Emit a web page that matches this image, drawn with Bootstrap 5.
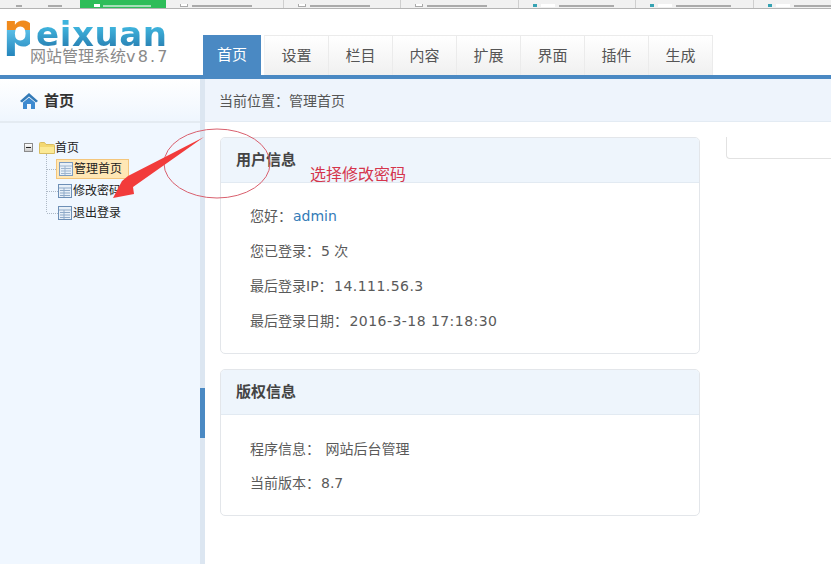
<!DOCTYPE html>
<html lang="zh">
<head>
<meta charset="utf-8">
<title>管理首页</title>
<link href="https://cdn.jsdelivr.net/npm/bootstrap@5.3.0/dist/css/bootstrap.min.css" rel="stylesheet">
<style>
html,body{height:564px;overflow:hidden;background:#fff;}
body{font-family:"DejaVu Sans","Noto Sans CJK SC",sans-serif;font-size:14px;color:#5a5a5a;position:relative;width:831px;}
.strip{height:9px;background:#f1f1f1;border-bottom:1px solid #b4b4b4;overflow:hidden;}
.tb{width:117.5px;height:8px;border-right:1px solid #cfcfcf;padding-left:14px;gap:4px;flex:none;}
.tb-first{width:80px;flex:none;height:8px;padding-left:16px;gap:26px;}
.tb-green{width:86px;flex:none;height:8px;background:#2ebd59;padding-left:14px;gap:3px;}
.smudge{display:block;height:2px;background:#aaa;margin-bottom:1px;}
.chk{width:8px;height:3px;border:1px solid #aaa;border-top:0;background:#fff;display:block;margin-bottom:1px;}
.teal{width:4px;height:3px;background:#36a3b3;display:block;margin-bottom:1px;}
.wbox{width:14px;height:3px;background:#fff;display:block;margin-bottom:1px;}
.wfade{height:2px;background:#a5e0b8;display:block;margin-bottom:1px;}
.head{height:66px;}
.logo{width:203px;flex:none;height:66px;padding:3px 0 0 3px;}
.logop{font-family:"DejaVu Sans",sans-serif;font-weight:700;font-size:46px;line-height:46px;height:50px;width:27px;flex:none;margin-top:-5px;background:linear-gradient(180deg,#f08a1c 0 46%,#58bde6 47%,#2283ba 100%);-webkit-background-clip:text;background-clip:text;color:transparent;}
.logoright{flex:none;padding:4px 0 0 6px;}
.logow{font-family:"DejaVu Sans",sans-serif;font-weight:700;font-size:34px;line-height:31px;height:31px;padding-top:3px;box-sizing:border-box;letter-spacing:.6px;white-space:nowrap;background:linear-gradient(180deg,#3fb4dd 35%,#2b86b8 95%);-webkit-background-clip:text;background-clip:text;color:transparent;}
.logosub{margin-left:-6px;font-size:16px;line-height:20px;color:#8a8a8a;white-space:nowrap;}
.logosub b{font-weight:400;letter-spacing:2.2px;font-size:16px;}
.tabs{margin-top:26px;height:40px;}
.tabs .nav-link{width:64px;height:40px;padding:0;line-height:40px;text-align:center;color:#555;font-size:15px;border:1px solid #ebebeb;border-width:1px 1px 0 0;border-radius:0;background:linear-gradient(180deg,#fff,#f0f0f0);}
.tabs .nav-item:first-child .nav-link{width:58px;margin-right:3px;background:#4a89c3;color:#fff;border:0;}
.tabs .nav-item:nth-child(2) .nav-link{border-left:1px solid #f2f2f2;width:65px;}
.blue{height:4px;background:#4a89c3;}
.mainrow{height:485px;}
.side{width:200px;flex:none;background:#f0f7ff;}
.sidehead{height:44px;padding-top:2px;background:linear-gradient(180deg,#fff,#eff6fe);border-bottom:2px solid #e4ebf2;padding-left:20px;gap:6px;color:#333;font-weight:700;font-size:15px;}
.split{width:5px;flex:none;background:#dce6f1;padding-top:309px;}
.handle{height:50px;background:#4a89c3;}
.content{flex:1;min-width:0;}
.crumb{height:43px;padding-top:2px;background:#eef4fc;border-bottom:1px solid #e3ebf3;padding-left:14px;color:#555;}
.tree{padding:14px 0 0 24px;color:#222;font-size:12px;}
.tree-root{height:21px;gap:6px;}
.minus{width:9px;height:9px;border:1px solid #8b8b8b;background:linear-gradient(180deg,#fff,#ccc);display:flex;align-items:center;justify-content:center;}
.minus i{display:block;width:5px;height:1px;background:#222;}
.vline{width:0;border-left:1px dotted #aeb9c6;height:58px;margin-top:-4px;}
.tl{height:22px;white-space:nowrap;}
.dash{width:11px;border-top:1px dotted #aeb9c6;flex:none;}
.tl-sel .dash{width:9px;}
.tl-sel .tlbox{background:#ffe7b5;border:1px solid #f4c67c;padding:0 6px 0 2px;}
.tlbox{height:20px;gap:1px;}
.panel{width:480px;border-color:#e3e6ea;border-radius:5px;overflow:hidden;}
.panel .card-header{height:45px;background:#eef5fc;border-bottom:1px solid #e2eaf2;padding:0 15px;font-weight:700;font-size:15px;color:#444;border-radius:0;}
.col-panels{margin:15px 0 0 15px;gap:15px;width:480px;flex:none;}
.pb1{height:170px;flex:none;padding:16px 29px 0;}
.pb2{height:100px;flex:none;padding:17px 29px 0;}
.lnr{height:35px;line-height:35px;white-space:nowrap;}
.lnr2{height:34px;line-height:34px;white-space:nowrap;}
.lnr a{color:#337ab7;text-decoration:none;margin-left:1px;}
.val{margin-left:1px;}
.num{letter-spacing:.45px;margin-left:1.5px;}
.sidebox{width:106px;height:22px;margin:15px 0 0 26px;flex:none;border-left:1px solid #e2e2e2;border-bottom:1px solid #e2e2e2;border-bottom-left-radius:4px;}
.annot{position:absolute;left:0;top:0;width:831px;height:564px;pointer-events:none;}
.note{position:absolute;left:310px;top:162px;font-size:16px;line-height:22px;color:#d5354c;font-family:"Noto Sans CJK SC",sans-serif;}
</style>
</head>
<body>
<div class="strip d-flex">
  <div class="tb-first d-flex align-items-end"><span class="smudge" style="width:6px"></span><span class="smudge" style="width:14px"></span></div>
  <div class="tb-green d-flex align-items-end"><span class="wbox" style="width:6px"></span><span class="wfade" style="width:48px"></span></div>
  <div class="tb d-flex align-items-end"><span class="chk"></span><span class="smudge" style="width:60px"></span></div>
  <div class="tb d-flex align-items-end"><span class="chk"></span><span class="smudge" style="width:60px"></span></div>
  <div class="tb d-flex align-items-end"><span class="chk"></span><span class="smudge" style="width:60px"></span></div>
  <div class="tb d-flex align-items-end"><span class="teal"></span><span class="wbox"></span><span class="smudge" style="width:55px"></span></div>
  <div class="tb d-flex align-items-end"><span class="teal"></span><span class="wbox"></span><span class="smudge" style="width:55px"></span></div>
  <div class="tb d-flex align-items-end"><span class="teal"></span><span class="wbox"></span><span class="smudge" style="width:55px"></span></div>
</div>
<header class="head d-flex">
  <div class="logo d-flex">
    <div class="logop">p</div>
    <div class="logoright">
      <div class="logow">eixuan</div>
      <div class="logosub">网站管理系统<b>v8.7</b></div>
    </div>
  </div>
  <ul class="nav tabs">
    <li class="nav-item"><a class="nav-link" href="#">首页</a></li>
    <li class="nav-item"><a class="nav-link" href="#">设置</a></li>
    <li class="nav-item"><a class="nav-link" href="#">栏目</a></li>
    <li class="nav-item"><a class="nav-link" href="#">内容</a></li>
    <li class="nav-item"><a class="nav-link" href="#">扩展</a></li>
    <li class="nav-item"><a class="nav-link" href="#">界面</a></li>
    <li class="nav-item"><a class="nav-link" href="#">插件</a></li>
    <li class="nav-item"><a class="nav-link" href="#">生成</a></li>
  </ul>
</header>
<div class="blue"></div>
<div class="mainrow d-flex">
  <aside class="side">
    <div class="sidehead d-flex align-items-center">
      <svg width="18" height="16" viewBox="0 0 18 16"><path d="M9 0 L18 8 L16 9.5 L9 3.5 L2 9.5 L0 8 Z" fill="#337ab7"/><path d="M3 9.5 L9 4.5 L15 9.5 V16 H11 V11 H7 V16 H3 Z" fill="#3d8ad0"/></svg>
      <span>首页</span>
    </div>
    <div class="tree">
      <div class="tree-root d-flex align-items-center">
        <span class="minus"><i></i></span>
        <svg width="16" height="12" viewBox="0 0 16 12"><path d="M.5 11.5V1.5q0-1 1-1h4l1.5 2h7.5q1 0 1 1v8z" fill="#f3d873" stroke="#d8bd62"/><path d="M1 5h14v6H1z" fill="#fbe995"/></svg>
        <span style="margin-left:-6px">首页</span>
      </div>
      <div class="d-flex" style="margin-left:22px">
        <div class="vline"></div>
        <ul class="list-unstyled m-0">
          <li class="tl tl-sel d-flex align-items-center"><span class="dash"></span><span class="tlbox d-flex align-items-center">
            <svg width="14" height="14" viewBox="0 0 14 14"><rect x=".5" y=".5" width="13" height="13" fill="#e8f0f8" stroke="#7d9cc0"/><path d="M1 4h12M2 6.5h10M2 9h10M2 11.5h10M6 4v9" stroke="#9db5d0"/></svg><span>管理首页</span></span></li>
          <li class="tl d-flex align-items-center"><span class="dash"></span><span class="tlbox d-flex align-items-center">
            <svg width="14" height="14" viewBox="0 0 14 14"><rect x=".5" y=".5" width="13" height="13" fill="#e8f0f8" stroke="#6d8fb6"/><path d="M1 4h12M2 6.5h10M2 9h10M2 11.5h10M6 4v9" stroke="#8faac8"/></svg><span>修改密码</span></span></li>
          <li class="tl d-flex align-items-center"><span class="dash"></span><span class="tlbox d-flex align-items-center">
            <svg width="14" height="14" viewBox="0 0 14 14"><rect x=".5" y=".5" width="13" height="13" fill="#e8f0f8" stroke="#6d8fb6"/><path d="M1 4h12M2 6.5h10M2 9h10M2 11.5h10M6 4v9" stroke="#8faac8"/></svg><span>退出登录</span></span></li>
        </ul>
      </div>
    </div>
  </aside>
  <div class="split"><div class="handle"></div></div>
  <main class="content">
    <div class="crumb d-flex align-items-center">当前位置：管理首页</div>
    <div class="d-flex">
      <div class="col-panels d-flex flex-column">
        <section class="card panel">
          <div class="card-header d-flex align-items-center">用户信息</div>
          <div class="card-body pb1">
            <div class="lnr">您好：<a href="#">admin</a></div>
            <div class="lnr">您已登录：<span class="val">5 次</span></div>
            <div class="lnr">最后登录IP：<span class="num">14.111.56.3</span></div>
            <div class="lnr">最后登录日期：<span class="num">2016-3-18 17:18:30</span></div>
          </div>
        </section>
        <section class="card panel">
          <div class="card-header d-flex align-items-center">版权信息</div>
          <div class="card-body pb2">
            <div class="lnr2">程序信息： <span class="val">网站后台管理</span></div>
            <div class="lnr2">当前版本：<span class="val">8.7</span></div>
          </div>
        </section>
      </div>
      <div class="sidebox"></div>
    </div>
  </main>
</div>
<svg class="annot" viewBox="0 0 831 564">
  <ellipse cx="217" cy="163.5" rx="53" ry="34.5" fill="none" stroke="#d9606e" stroke-width="1"/>
  <polygon points="204,137 128,176 122,181 113,198 134,194 133,187" fill="#f23b3b"/>
</svg>
<div class="note">选择修改密码</div>
</body>
</html>
